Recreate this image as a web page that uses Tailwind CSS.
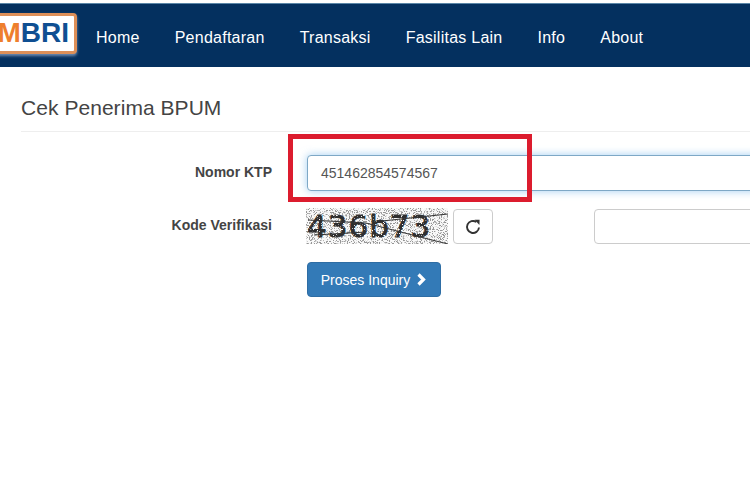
<!DOCTYPE html>
<html>
<head>
<meta charset="utf-8">
<script src="https://cdn.jsdelivr.net/npm/@tailwindcss/browser@4"></script>
</head>
<body class="bg-white font-['Liberation_Sans',Arial,sans-serif]">
<div class="relative w-[750px] h-[500px] overflow-hidden bg-white">
  <nav class="mt-[3px] h-[64px] bg-[#04305f] border-t border-[#5a86a8] flex items-center text-white text-base">
    <div class="ml-[-30px] w-[107px] h-[41px] mb-[5px] bg-white border-[3px] border-[#dd8f58] rounded-[4px] shadow-[0_2px_3px_rgba(180,200,230,0.6)] flex items-center justify-end pr-[5px] text-[28px] font-bold leading-none shrink-0">
      <span class="text-[#ee7f2d]">M</span><span class="text-[#0f4f92]">BRI</span>
    </div>
    <div class="ml-[19px] pt-[4px] flex gap-[35px] whitespace-nowrap tracking-[0.25px]">
      <span>Home</span><span>Pendaftaran</span><span>Transaksi</span><span>Fasilitas Lain</span><span>Info</span><span>About</span>
    </div>
  </nav>
  <main class="pl-[21px]">
    <h1 class="mt-[28px] text-[21px] leading-[26px] text-[#444] tracking-[0.05px]">Cek Penerima BPUM</h1>
    <div class="mt-[10px] h-px bg-[#eee]"></div>
    <form class="mt-[23px] flex flex-col text-sm text-[#555]">
      <div class="flex items-center h-[36px]">
        <label class="w-[251px] shrink-0 text-right font-bold text-[#444] mb-[2px]">Nomor KTP</label>
        <div class="ml-[35px] w-[480px] h-[36px] shrink-0 flex items-center pl-[13px] bg-white border border-[#7ea8c6] rounded-[4px] shadow-[0_0_8px_rgba(102,175,233,0.6)]">451462854574567</div>
      </div>
      <div class="flex items-center h-[36px] mt-[17px]">
        <label class="w-[251px] shrink-0 text-right font-bold text-[#444] mb-[3px]">Kode Verifikasi</label>
        <div class="ml-[34px] relative w-[142px] h-[36px] shrink-0 overflow-hidden">
          <svg class="absolute inset-0" width="142" height="36" viewBox="0 0 142 36">
            <filter id="noise" x="0" y="0" width="100%" height="100%">
              <feTurbulence type="fractalNoise" baseFrequency="0.9" numOctaves="2" seed="7"/>
              <feColorMatrix values="0 0 0 0 0.3  0 0 0 0 0.3  0 0 0 0 0.3  9 0 0 0 -4.6"/>
            </filter>
            <rect width="142" height="36" fill="#f8f8f8"/>
            <rect width="142" height="36" filter="url(#noise)"/>
          </svg>
          <span class="absolute left-[1px] top-[1px] font-['DejaVu_Sans',sans-serif] text-[31px] leading-[34px] tracking-[1px] text-[#2e2e2e] [-webkit-text-stroke:0.9px_#2e2e2e] whitespace-nowrap">436b73</span>
          <svg class="absolute inset-0" width="142" height="36" viewBox="0 0 142 36">
            <filter id="specks" x="0" y="0" width="100%" height="100%">
              <feTurbulence type="fractalNoise" baseFrequency="0.8" numOctaves="2" seed="21"/>
              <feColorMatrix values="0 0 0 0 1  0 0 0 0 1  0 0 0 0 1  9 0 0 0 -5.6"/>
            </filter>
            <rect width="142" height="36" filter="url(#specks)"/>
            <path d="M2 12 L60 15 L118 30 L142 36 M76 13 L142 6 M8 27 L60 24" stroke="#333" stroke-width="1" fill="none"/>
          </svg>
        </div>
        <button type="button" class="ml-[5px] mt-[1px] w-[40px] h-[35px] shrink-0 flex items-center justify-center bg-white border border-[#ccc] rounded-[4px]">
          <svg width="16" height="16" viewBox="0 0 16 16" fill="none" stroke="#333" stroke-width="1.9">
            <path d="M14 8.5 A6 6 0 1 1 11.4 3"/>
            <path d="M9.6 0.8 L14.6 0.8 L14.4 6 Z" fill="#333" stroke="none"/>
          </svg>
        </button>
        <div class="ml-[101px] w-[200px] h-[35px] shrink-0 bg-white border border-[#ccc] rounded-[4px]"></div>
      </div>
      <div class="mt-[18px] ml-[286px]">
        <button type="button" class="w-[134px] h-[35px] flex items-center justify-center gap-[6px] bg-[#337ab7] border border-[#2e6da4] rounded-[4px] text-white text-sm">
          Proses Inquiry
          <svg width="11" height="13" viewBox="0 0 11 13"><path d="M2.5 1.5 L7.5 6.5 L2.5 11.5" fill="none" stroke="#fff" stroke-width="3.2"/></svg>
        </button>
      </div>
    </form>
  </main>
  <div class="absolute left-[288px] top-[134px] w-[244px] h-[68px] border-[5px] border-[#dc1c2e]"></div>
</div>
</body>
</html>
